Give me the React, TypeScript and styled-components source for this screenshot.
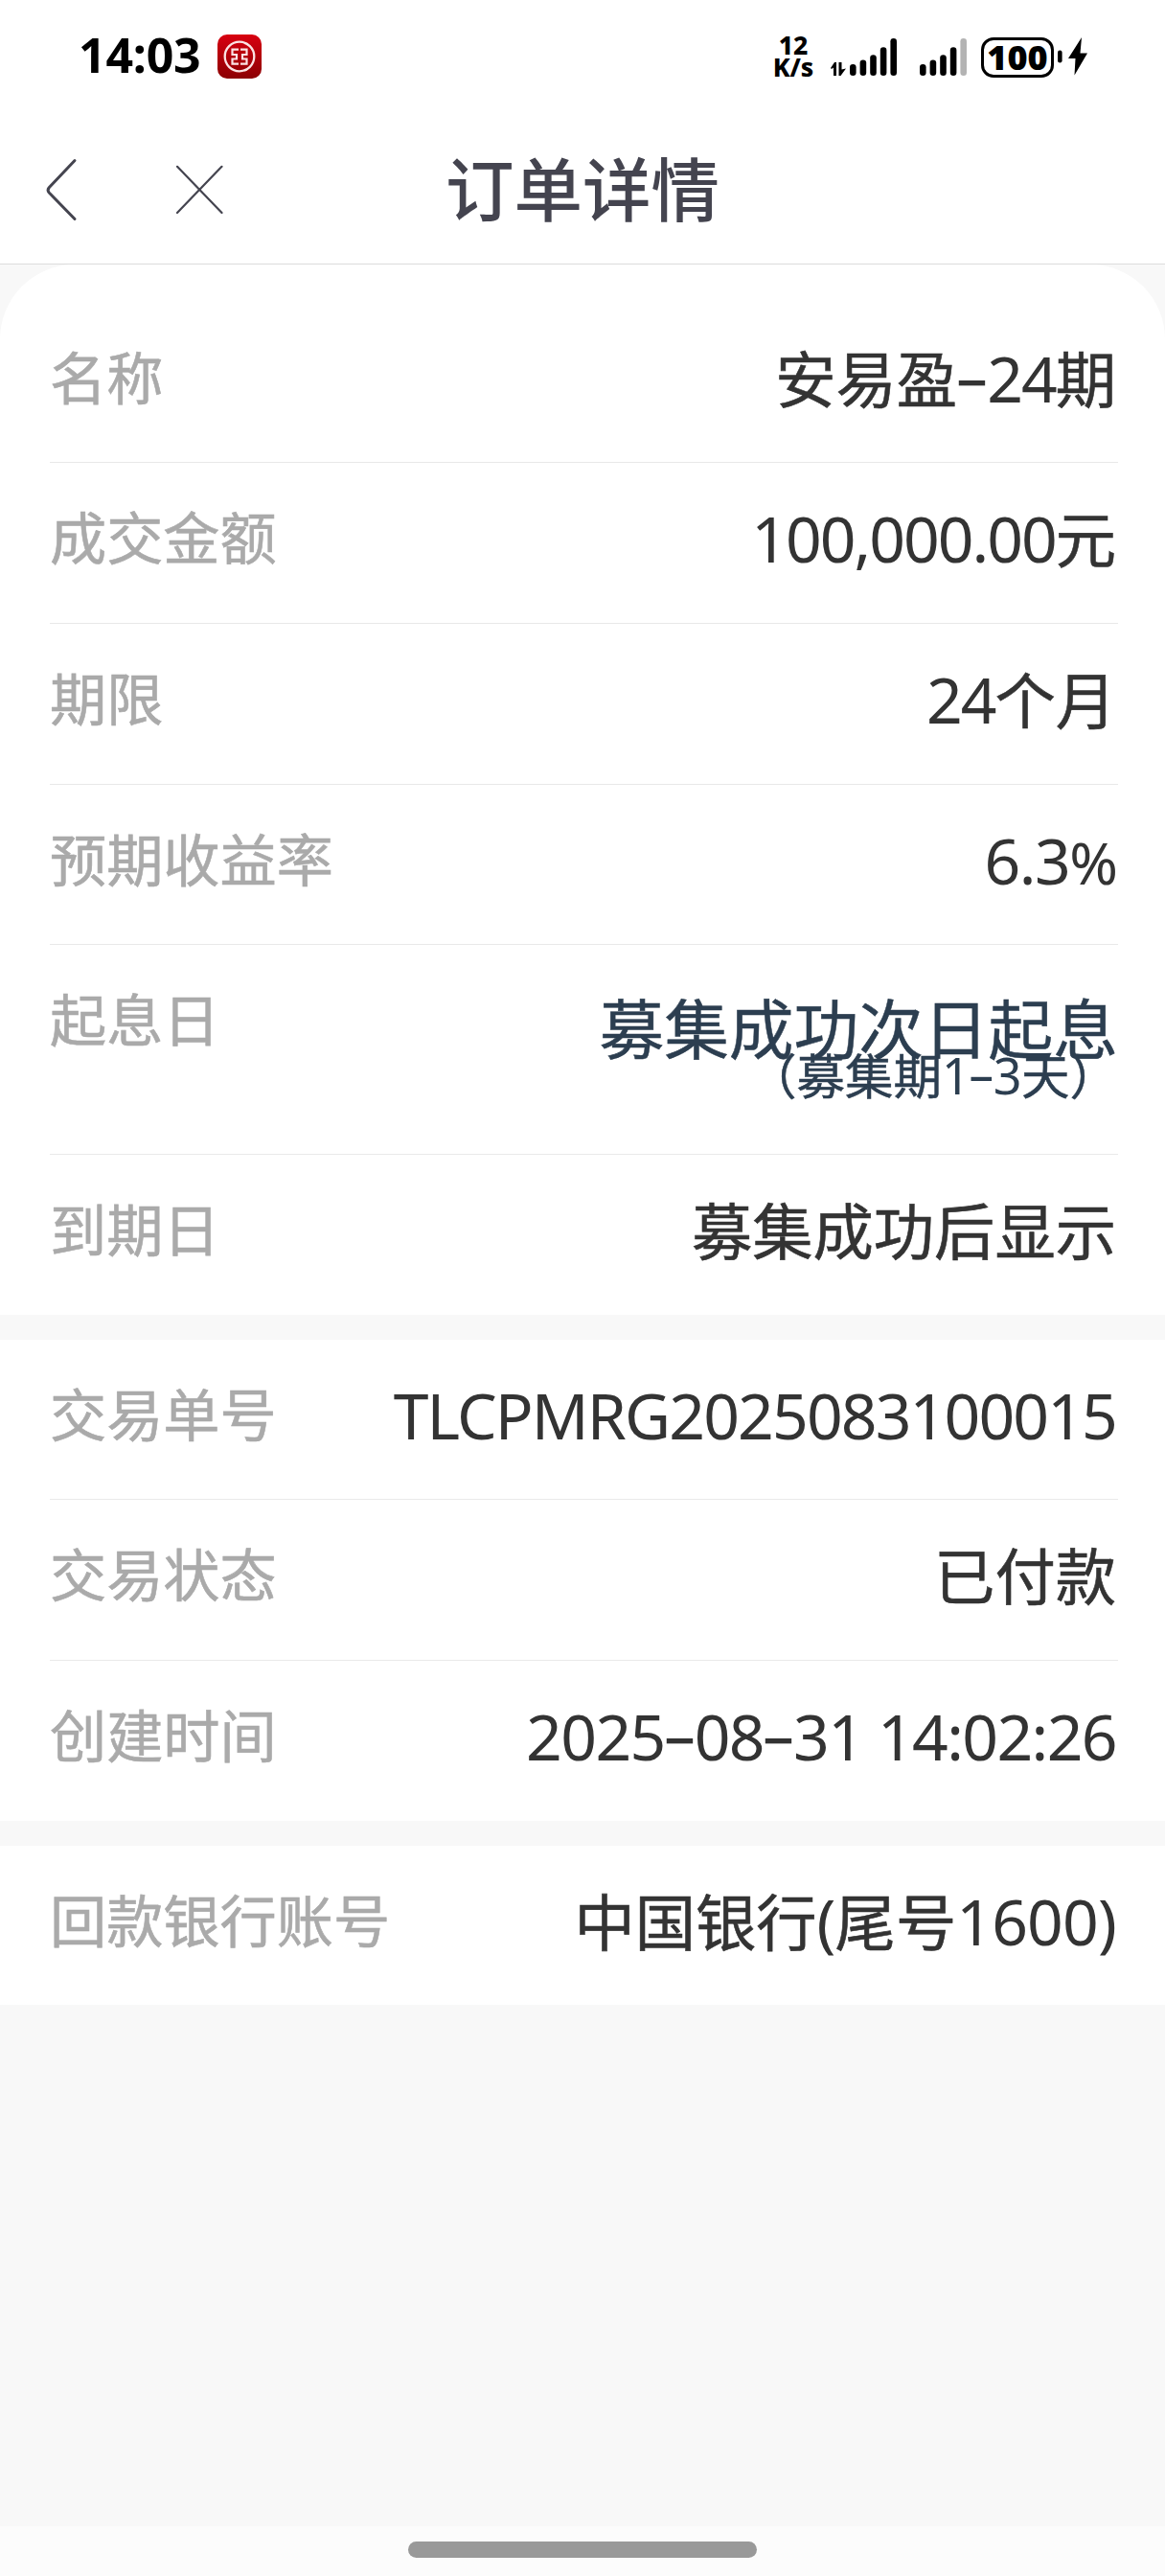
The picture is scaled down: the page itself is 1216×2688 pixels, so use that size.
import React from "react";
import styled, { createGlobalStyle } from "styled-components";

const cjk = `"Noto Sans CJK SC", sans-serif`;
const latin = `"Noto Sans", "Noto Sans CJK SC", sans-serif`;

const GlobalStyle = createGlobalStyle`
  *, *::before, *::after { box-sizing: border-box; }
  body { margin: 0; background: #f8f8f8; font-family: ${cjk}; }
`;

const Screen = styled.div`
  display: flex;
  flex-direction: column;
  width: 1216px;
  height: 2688px;
  overflow: hidden;
  background: #f8f8f8;
`;

const StatusBar = styled.div`
  display: flex;
  align-items: center;
  justify-content: space-between;
  height: 118px;
  padding: 0 81px 0 82px;
  background: #fff;
  color: #000;
  font-family: ${latin};
`;

const StatusGroup = styled.div`
  display: flex;
  align-items: center;
`;

const Clock = styled.div`
  width: 145px;
  padding-bottom: 4px;
  font-size: 50px;
  font-weight: 700;
  line-height: 60px;
  letter-spacing: -0.2px;
`;

const NetSpeed = styled.div`
  display: flex;
  flex-direction: column;
  align-items: center;
  width: 44px;
  margin-right: 17px;
  font-size: 26.5px;
  font-weight: 800;
  line-height: 23px;
`;

const Battery = styled.div`
  display: flex;
  align-items: center;
  justify-content: center;
  width: 76px;
  height: 42px;
  margin: 1px 4px 0 15px;
  border: 3px solid #000;
  border-radius: 13px;
  font-size: 36px;
  font-weight: 900;
  line-height: 36px;
`;

const NavBar = styled.header`
  display: grid;
  grid-template-columns: 1fr auto 1fr;
  align-items: center;
  height: 158px;
  border-bottom: 1px solid #dcdcdc;
  background: #fff;
`;

const NavActions = styled.div`
  display: flex;
  align-items: center;
  gap: 101px;
  padding: 2px 0 0 46px;
`;

const Title = styled.h1`
  margin: 0;
  padding-bottom: 6px;
  color: #44444f;
  font-size: 71.5px;
  font-weight: 500;
  line-height: 100px;
`;

const Sections = styled.main`
  display: flex;
  flex: 1;
  flex-direction: column;
  gap: 26px;
`;

const Section = styled.section<{ $first?: boolean }>`
  padding: ${(p) => (p.$first ? "39.5px 49px 0 52px" : "0 49px 0 52px")};
  border-radius: ${(p) => (p.$first ? "78px 78px 0 0" : "0")};
  background: #fff;
`;

const Row = styled.div<{ $tall?: boolean }>`
  display: flex;
  justify-content: space-between;
  height: ${(p) => (p.$tall ? 219 : 167.7)}px;
  border-bottom: 1px solid #e9e9e9;
  white-space: nowrap;

  &:last-child {
    height: 166.5px;
    border-bottom: 0;
  }
`;

const Label = styled.div`
  color: #aaa;
  font-size: 59.2px;
  line-height: 151px;
  -webkit-text-stroke: 0.6px #aaa;
`;

const Value = styled.div`
  padding-right: 2px;
  color: #333;
  font-size: 63.3px;
  line-height: 153px;
  -webkit-text-stroke: 0.6px #333;
`;

const Latin = styled.span<{ $track?: number; $size?: number }>`
  font-family: ${latin};
  font-size: ${(p) => p.$size ?? 66}px;
  letter-spacing: ${(p) => p.$track ?? -2}px;
  -webkit-text-stroke: 0;
`;

const Dash = styled.span`
  display: inline-block;
  width: 0.47em;
  font-family: Inter, sans-serif;
  letter-spacing: 0;
  line-height: 1;
  text-align: center;
  transform: scaleX(1.3);
`;

const Note = styled.div`
  display: flex;
  flex-direction: column;
  align-items: flex-end;
  padding-top: 41px;
  color: #2c3e50;
  -webkit-text-stroke: 0.5px #2c3e50;
`;

const NoteMain = styled.div`
  font-size: 67.7px;
  line-height: 86px;
`;

const NoteSub = styled.div`
  margin-top: -18px;
  font-size: 50.5px;
  line-height: 50px;
`;

const HomeArea = styled.footer`
  display: flex;
  justify-content: center;
  height: 52px;
  padding-top: 16px;
  background: #fcfcfc;
`;

const HomeIndicator = styled.div`
  width: 364px;
  height: 17px;
  border-radius: 9px;
  background: #999;
`;

const DataArrows = styled.svg`
  margin: 26px 4px 0 0;
`;

const SignalGap = styled.div`
  width: 24px;
`;

function BankIcon() {
  return (
    <svg width="46" height="46" viewBox="0 0 46 46">
      <defs>
        <linearGradient id="bank" x1="0" y1="0" x2="0" y2="1">
          <stop offset="0" stopColor="#d80010" />
          <stop offset="1" stopColor="#8c0003" />
        </linearGradient>
      </defs>
      <rect width="46" height="46" rx="10" fill="url(#bank)" />
      <circle cx="23" cy="23" r="15.3" fill="none" stroke="#fbe3e4" strokeWidth="2.3" />
      <path
        d="M22 15.7H15.5V21H20V25.5H15.5V30.7H22M24 15.7H30.5V21H26V25.5H30.5V30.7H24"
        fill="none"
        stroke="#fbe3e4"
        strokeWidth="2.2"
      />
    </svg>
  );
}

const barTops = [27, 22.5, 17.3, 9.3, 0];

function SignalBars({ level }: { level: number }) {
  return (
    <svg width="49" height="39" viewBox="0 0 49 39">
      {barTops.map((top, i) => (
        <rect
          key={top}
          x={i * 10.6}
          y={top}
          width="6.6"
          height={39 - top}
          rx="3.3"
          fill={i < level ? "#000" : "#b3b3b3"}
        />
      ))}
    </svg>
  );
}

function BackIcon() {
  return (
    <svg width="36" height="68" viewBox="0 0 36 68">
      <path
        d="M32 3.5L5.2 31.8Q3 34.5 5.2 37L32 64.5"
        fill="none"
        stroke="#44444f"
        strokeWidth="3"
        strokeLinecap="round"
      />
    </svg>
  );
}

function CloseIcon() {
  return (
    <svg width="50" height="52" viewBox="0 0 50 52">
      <path
        d="M2 1.8L48.5 50M48.5 1.8L2 50"
        fill="none"
        stroke="#44444f"
        strokeWidth="2.2"
        strokeLinecap="round"
      />
    </svg>
  );
}

export default function App() {
  return (
    <Screen>
      <GlobalStyle />
      <StatusBar>
        <StatusGroup>
          <Clock>14:03</Clock>
          <BankIcon />
        </StatusGroup>
        <StatusGroup>
          <NetSpeed>
            <span>12</span>
            <span>K/s</span>
          </NetSpeed>
          <DataArrows width="16" height="14" viewBox="0 0 16 14">
            <path d="M0 6L4 0H6V14H3V5.5L1 7ZM8.5 0H11.5V7.5L16 6.5L10.5 14H8.5Z" fill="#000" />
          </DataArrows>
          <SignalBars level={5} />
          <SignalGap />
          <SignalBars level={4} />
          <Battery>100</Battery>
          <svg width="31" height="40" viewBox="0 0 31 40">
            <rect x="0" y="13.5" width="4.6" height="13" rx="2.3" fill="#000" />
            <path d="M25 0L11 22H18.5L17.5 39.5L31 16.5H23.5Z" fill="#000" />
          </svg>
        </StatusGroup>
      </StatusBar>

      <NavBar>
        <NavActions>
          <BackIcon />
          <CloseIcon />
        </NavActions>
        <Title>订单详情</Title>
      </NavBar>

      <Sections>
        <Section $first>
          <Row>
            <Label>名称</Label>
            <Value>
              安易盈
              <Latin>
                <Dash>-</Dash>24
              </Latin>
              期
            </Value>
          </Row>
          <Row>
            <Label>成交金额</Label>
            <Value>
              <Latin>100,000.00</Latin>元
            </Value>
          </Row>
          <Row>
            <Label>期限</Label>
            <Value>
              <Latin>24</Latin>个月
            </Value>
          </Row>
          <Row>
            <Label>预期收益率</Label>
            <Value>
              <Latin $track={-1.5}>6.3</Latin>
              <Latin $size={61} $track={-2}>%</Latin>
            </Value>
          </Row>
          <Row $tall>
            <Label>起息日</Label>
            <Note>
              <NoteMain>募集成功次日起息</NoteMain>
              <NoteSub>
                （募集期
                <Latin $size={52} $track={-0.5}>
                  1<Dash>-</Dash>3
                </Latin>
                天）
              </NoteSub>
            </Note>
          </Row>
          <Row>
            <Label>到期日</Label>
            <Value>募集成功后显示</Value>
          </Row>
        </Section>

        <Section>
          <Row>
            <Label>交易单号</Label>
            <Value>
              <Latin $track={-1.85}>TLCPMRG2025083100015</Latin>
            </Value>
          </Row>
          <Row>
            <Label>交易状态</Label>
            <Value>已付款</Value>
          </Row>
          <Row>
            <Label>创建时间</Label>
            <Value>
              <Latin $track={-1.6}>
                2025<Dash>-</Dash>08<Dash>-</Dash>31 14:02:26
              </Latin>
            </Value>
          </Row>
        </Section>

        <Section>
          <Row>
            <Label>回款银行账号</Label>
            <Value>
              中国银行<Latin $track={-0.8}>(</Latin>尾号<Latin $track={-0.8}>1600)</Latin>
            </Value>
          </Row>
        </Section>
      </Sections>

      <HomeArea>
        <HomeIndicator />
      </HomeArea>
    </Screen>
  );
}
